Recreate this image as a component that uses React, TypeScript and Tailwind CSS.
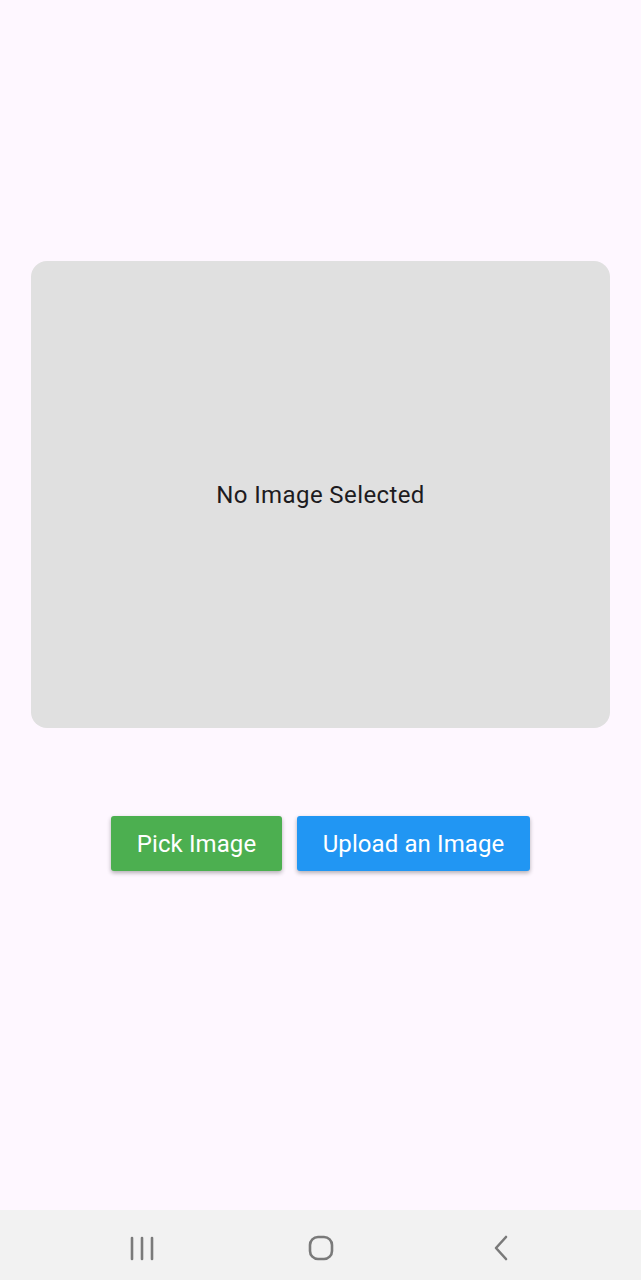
export default function App() {
  return (
    <div className="w-[641px] h-[1280px] bg-[#fef7ff] flex flex-col" style={{ fontFamily: "Roboto, 'Noto Sans', sans-serif" }}>
      <div className="h-[1210px] flex flex-col pt-[261px]">
        <div className="mx-[31px] w-[579px] h-[467px] rounded-[16px] bg-[#e0e0e0] flex items-center justify-center">
          <span className="text-[24px] text-[#1d1b20] tracking-[0.4px]">No Image Selected</span>
        </div>
        <div className="mt-[88px] flex justify-center gap-[15px]">
          <button className="w-[171px] h-[55px] rounded-[3px] bg-[#4caf50] text-white text-[24px] font-normal tracking-[0.1px] shadow-[0_2px_4px_rgba(0,0,0,0.3)]">
            Pick Image
          </button>
          <button className="w-[233px] h-[55px] rounded-[3px] bg-[#2196f3] text-white text-[24px] font-normal tracking-[0.1px] shadow-[0_2px_4px_rgba(0,0,0,0.3)]">
            Upload an Image
          </button>
        </div>
      </div>
      <div className="h-[70px] bg-[#f2f2f2] flex items-center">
        <div className="w-full relative h-full">
          <svg className="absolute left-[128px] top-[26px]" width="30" height="26" viewBox="0 0 30 26">
            <line x1="4" y1="2" x2="4" y2="23" stroke="#7a7a7a" strokeWidth="2.6" strokeLinecap="round" />
            <line x1="14" y1="2" x2="14" y2="23" stroke="#7a7a7a" strokeWidth="2.6" strokeLinecap="round" />
            <line x1="24" y1="2" x2="24" y2="23" stroke="#7a7a7a" strokeWidth="2.6" strokeLinecap="round" />
          </svg>
          <svg className="absolute left-[307px] top-[24px]" width="28" height="28" viewBox="0 0 28 28">
            <rect x="3" y="3" width="22" height="22" rx="8" fill="none" stroke="#7a7a7a" strokeWidth="2.6" />
          </svg>
          <svg className="absolute left-[490px] top-[25px]" width="22" height="26" viewBox="0 0 22 26">
            <polyline points="16,2 6,13 16,24" fill="none" stroke="#7a7a7a" strokeWidth="2.6" strokeLinecap="round" strokeLinejoin="round" />
          </svg>
        </div>
      </div>
    </div>
  );
}
